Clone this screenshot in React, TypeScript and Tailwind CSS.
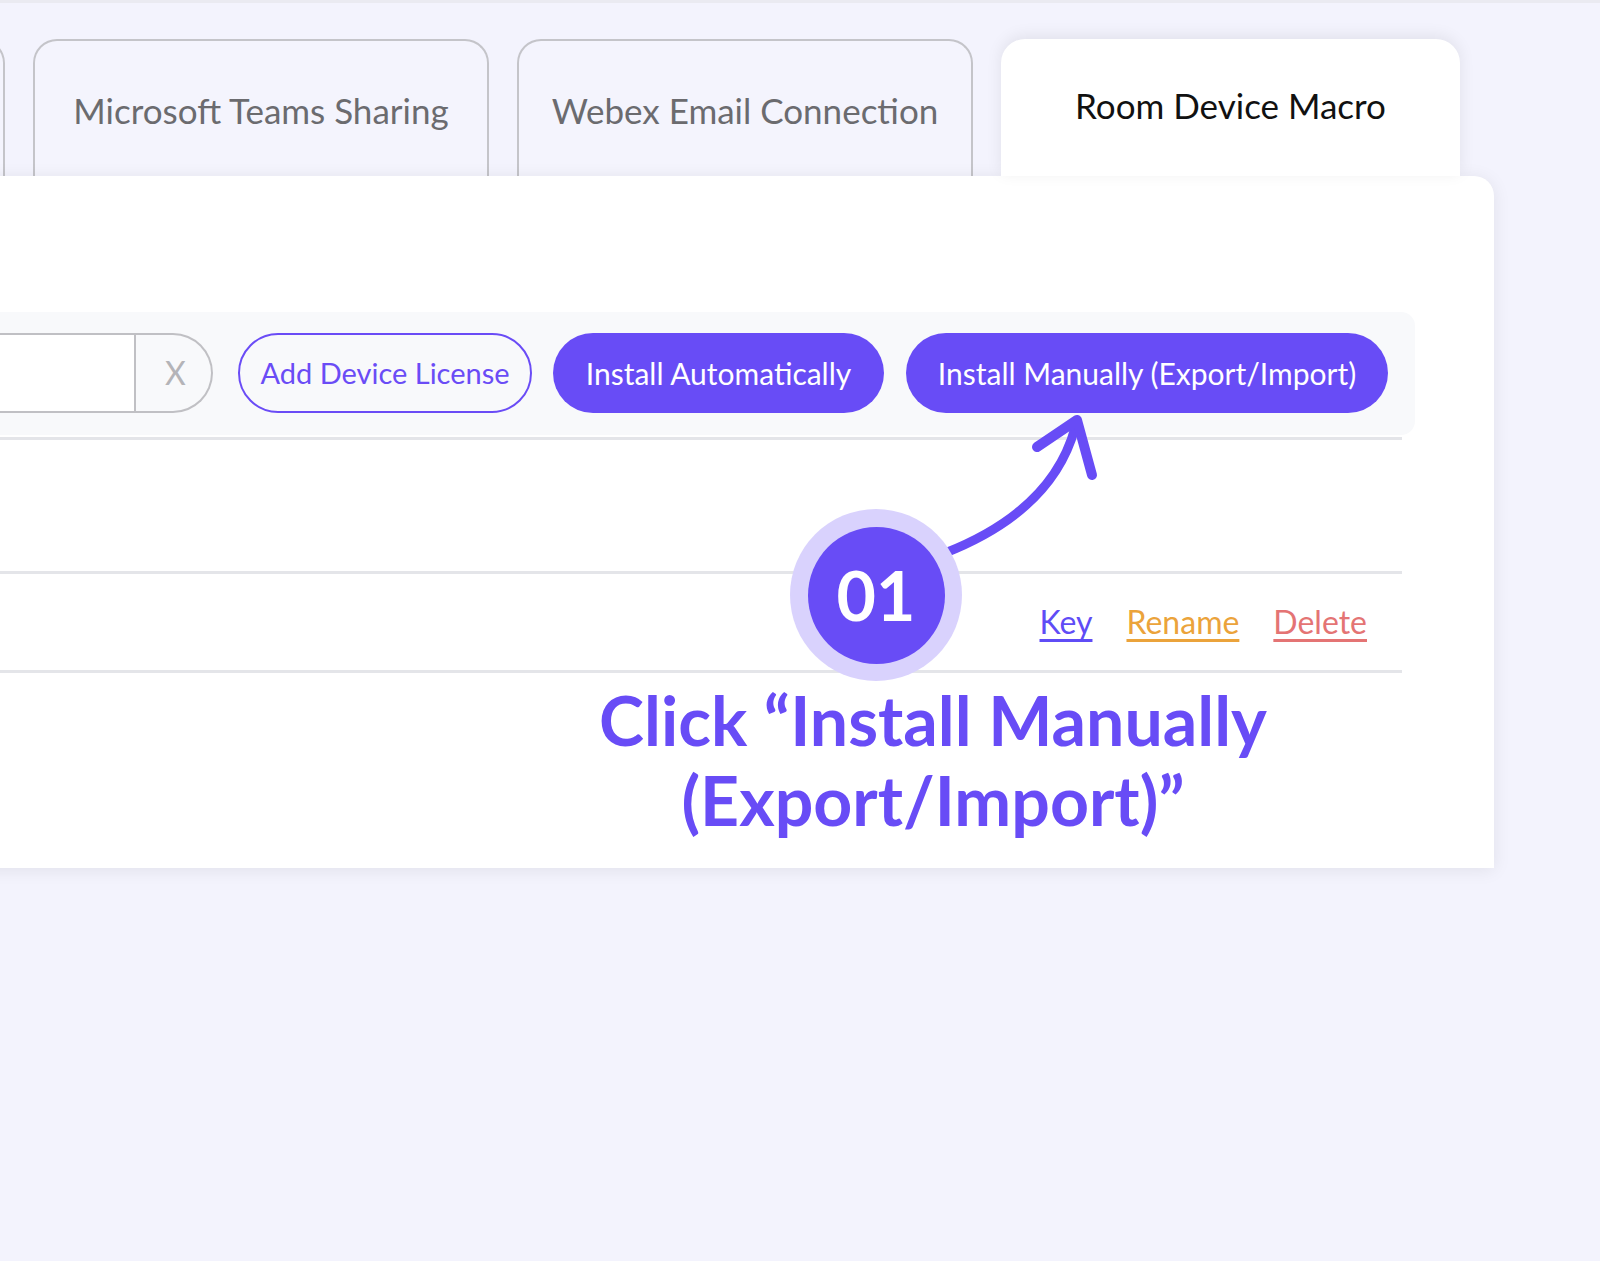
import React from 'react';

const tabs = ['', 'Microsoft Teams Sharing', 'Webex Email Connection'];

function Tab({ label }: { label: string }) {
  return (
    <div className="h-[137px] w-[456px] shrink-0 rounded-t-[24px] border-2 border-b-0 border-[#c4c4c9] bg-[#f4f4fd] pt-[49px] text-center text-[35px] leading-[40px] text-[#6b6b6f]">
      {label}
    </div>
  );
}

export default function App() {
  return (
    <div className="relative h-[1261px] overflow-hidden border-t-[3px] border-[#eaeaf1] bg-[#f3f3fd] font-[Lato,sans-serif]">
      {/* tab strip, scrolled so that the first tab is cut off */}
      <div className="ml-[-451px] mt-[36px] flex gap-[28px]">
        {tabs.map((t, i) => (
          <Tab key={i} label={t} />
        ))}
        <div className="relative z-20 h-[137px] w-[459px] shrink-0 rounded-t-[24px] bg-white pt-[46px] text-center text-[35px] leading-[40px] text-[#111111] shadow-[0_-3px_16px_rgba(0,0,0,0.08)]">
          Room Device Macro
        </div>
      </div>

      <div className="relative z-10 ml-[-40px] h-[692px] w-[1534px] rounded-tr-[20px] bg-white pt-[136px] shadow-[0_2px_18px_rgba(0,0,0,0.08)]">
        <div className="mr-[79px] flex items-center rounded-r-[14px] bg-[#f8f9fb] pb-[22px] pt-[21px]">
          <div className="flex h-[80px] w-[253px] shrink-0 rounded-r-full border-2 border-l-0 border-[#c0c0c4]">
            <div className="w-[174px] bg-white" />
            <div className="flex flex-1 items-center justify-center border-l-2 border-[#c0c0c4] pl-[4px] text-[32px] text-[#b4b4b8]">
              X
            </div>
          </div>
          <button className="ml-[25px] h-[80px] w-[294px] shrink-0 rounded-full border-2 border-[#6a4cf6] text-[29px] text-[#6a4cf6]">
            Add Device License
          </button>
          <button className="ml-[21px] h-[80px] w-[331px] shrink-0 rounded-full bg-[#684cf6] text-[30px] text-white">
            Install Automatically
          </button>
          <button className="ml-[22px] h-[80px] w-[482px] shrink-0 rounded-full bg-[#684cf6] text-[30px] text-white">
            Install Manually (Export/Import)
          </button>
        </div>

        <div className="mr-[92px] mt-[2px]">
          <div className="h-[134px] border-t-[3px] border-[#e4e5e9]" />
          <div className="flex h-[99px] items-center justify-end gap-[34px] border-t-[3px] border-[#e4e5e9] pr-[35px] text-[32px]">
            <a className="text-[#5f4cf6] underline underline-offset-[5px]">Key</a>
            <a className="text-[#eba33b] underline underline-offset-[5px]">Rename</a>
            <a className="text-[#e47474] underline underline-offset-[5px]">Delete</a>
          </div>
          <div className="border-t-[3px] border-[#e4e5e9]" />
        </div>
      </div>

      {/* annotation overlay */}
      <svg
        className="pointer-events-none absolute left-0 top-0 z-30 h-[1261px] w-[1600px]"
        viewBox="0 0 1600 1261"
        fill="none"
      >
        <path d="M945 550 Q1052 508 1075 425" stroke="#684cf6" strokeWidth="9" strokeLinecap="round" />
        <path d="M1037 444 L1077 417 L1092 472" stroke="#684cf6" strokeWidth="10" strokeLinecap="round" strokeLinejoin="round" />
      </svg>
      <div className="absolute left-[790px] top-[506px] z-40 flex h-[172px] w-[172px] items-center justify-center rounded-full bg-[#d9d2fd]">
        <div className="flex h-[137px] w-[137px] items-center justify-center rounded-full bg-[#684cf6] text-[68px] font-bold text-white">
          01
        </div>
      </div>
      <div className="absolute left-[533px] top-[677px] z-40 w-[800px] text-center text-[68px] font-bold leading-[80px] text-[#684cf6]">
        Click “Install Manually
        <br />
        (Export/Import)”
      </div>
    </div>
  );
}
